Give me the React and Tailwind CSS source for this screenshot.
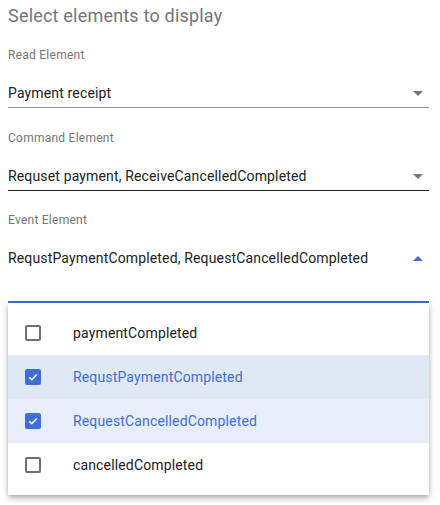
import React from 'react';

const Arrow = ({ up, color }) => (
  <svg width="10" height="5" viewBox="0 0 10 5" className="mr-[6px] shrink-0">
    {up ? <path d="M0 5 L5 0 L10 5 Z" fill={color} /> : <path d="M0 0 L5 5 L10 0 Z" fill={color} />}
  </svg>
);

const Checkbox = ({ checked }) =>
  checked ? (
    <div className="w-4 h-4 rounded-[2px] bg-[#3f6fd6] flex items-center justify-center">
      <svg width="12" height="12" viewBox="0 0 24 24">
        <path d="M4.5 12.5 L9.5 17.5 L19.5 7" fill="none" stroke="#fff" strokeWidth="3" />
      </svg>
    </div>
  ) : (
    <div className="w-4 h-4 rounded-[2px] border-2 border-[#707070] bg-white" />
  );

const options = [
  { name: 'paymentCompleted', checked: false, bg: 'bg-white' },
  { name: 'RequstPaymentCompleted', checked: true, bg: 'bg-[#e0e7f5]' },
  { name: 'RequestCancelledCompleted', checked: true, bg: 'bg-[#e8eef9]' },
  { name: 'cancelledCompleted', checked: false, bg: 'bg-white' },
];

export default function App() {
  return (
    <div className="bg-white min-h-[505px] pl-2 pr-[11px] font-['Roboto',sans-serif]">
      <div className="h-[32px] leading-[32px] text-[18px] tracking-[0.2px] text-[#757575]">Select elements to display</div>

      <div className="mt-[15px] text-xs leading-4 tracking-[0.25px] text-[#757575]">Read Element</div>
      <div className="h-[45px] pt-4 flex items-center justify-between border-b border-[#949494]">
        <span className="text-sm tracking-[0.15px] text-[#212121]">Payment receipt</span>
        <Arrow color="#757575" />
      </div>

      <div className="mt-[22px] text-xs leading-4 tracking-[0.25px] text-[#757575]">Command Element</div>
      <div className="h-[45px] pt-4 flex items-center justify-between border-b border-[#212121]">
        <span className="text-sm tracking-[0.15px] text-[#212121]">Requset payment, ReceiveCancelledCompleted</span>
        <Arrow color="#757575" />
      </div>

      <div className="mt-[21px] text-xs leading-4 tracking-[0.25px] text-[#757575]">Event Element</div>
      <div className="h-[75px] pt-4 border-b-2 border-[#3f6fd6]">
        <div className="h-7 flex items-center justify-between">
          <span className="text-sm tracking-[0.15px] text-[#212121]">RequstPaymentCompleted, RequestCancelledCompleted</span>
          <Arrow up color="#3f6fd6" />
        </div>
      </div>

      <div className="bg-white py-2 shadow-[0_2px_4px_-1px_rgba(0,0,0,0.2),0_4px_5px_0_rgba(0,0,0,0.14),0_1px_10px_0_rgba(0,0,0,0.12)]">
        {options.map((o) => (
          <div key={o.name} className={`h-11 flex items-center pl-[17px] ${o.bg}`}>
            <Checkbox checked={o.checked} />
            <span className={`ml-8 text-sm tracking-[0.15px] ${o.checked ? 'text-[#3f6fd6]' : 'text-[#212121]'}`}>{o.name}</span>
          </div>
        ))}
      </div>
    </div>
  );
}
